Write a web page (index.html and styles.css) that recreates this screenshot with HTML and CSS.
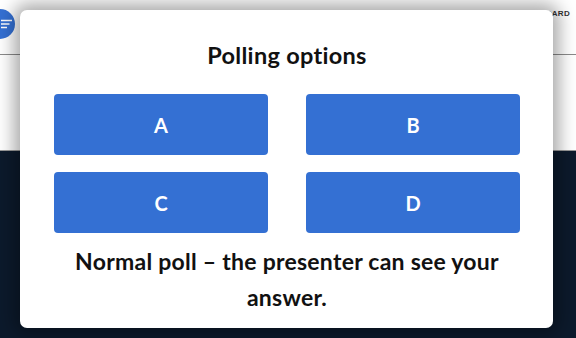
FILE: index.html
```html
<!DOCTYPE html>
<html lang="en">
<head>
<meta charset="utf-8">
<title>Polling options</title>
<link rel="stylesheet" href="styles.css">
</head>
<body>
<div class="page">
  <header class="topbar">
    <button class="menu-btn" aria-label="Menu">
      <svg width="12" height="10" viewBox="0 0 12 10"><path d="M0 1.5H11M0 5H8.5M0 8.5H6" stroke="#fff" stroke-width="1.3" fill="none"/></svg>
    </button>
    <div class="nav-icons">
      <span class="nav-dot"></span>
      <span class="nav-dot"></span>
      <span class="nav-dot"></span>
    </div>
    <div class="nav-label">DASHBOARD</div>
  </header>
  <div class="band"></div>
  <main class="dark"></main>
</div>

<div class="modal" role="dialog" aria-labelledby="poll-title">
  <h2 id="poll-title" class="modal-title">Polling options</h2>
  <div class="options">
    <button class="option">A</button>
    <button class="option">B</button>
    <button class="option">C</button>
    <button class="option">D</button>
  </div>
  <p class="note">Normal poll – the presenter can see your answer.</p>
</div>
</body>
</html>
```
FILE: styles.css
```css
html, body {
  margin: 0;
  padding: 0;
  width: 576px;
  height: 338px;
  overflow: hidden;
  font-family: "Lato", "Open Sans", sans-serif;
}

.page {
  display: flex;
  flex-direction: column;
  height: 338px;
  background: #0c1a2c;
}

.topbar {
  height: 54px;
  background: #ffffff;
  border-bottom: 1px solid #8a8a8a;
  display: flex;
  align-items: center;
  position: relative;
}

.menu-btn {
  width: 30px;
  height: 30px;
  border-radius: 50%;
  border: 0;
  padding: 0 0 0 16px;
  margin-left: -15px;
  margin-top: -6px;
  background: #3470d3;
  display: flex;
  align-items: center;
  justify-content: flex-start;
}

.nav-icons {
  display: flex;
  gap: 120px;
  margin-left: 116px;
  margin-top: -6px;
}

.nav-dot {
  width: 28px;
  height: 28px;
  border-radius: 50%;
  background: #1d3a6b;
}

.nav-label {
  margin-left: auto;
  margin-right: 6px;
  align-self: flex-start;
  margin-top: 9px;
  font-family: "Liberation Sans", sans-serif;
  font-size: 8px;
  font-weight: 700;
  letter-spacing: 0.3px;
  color: #333;
}

.band {
  height: 95px;
  background: #ffffff;
  border-bottom: 1px solid #9a9a9a;
}

.dark {
  flex: 1;
  background: #0c1a2c;
}

.modal {
  position: absolute;
  left: 20px;
  top: 10px;
  width: 533px;
  height: 318px;
  box-sizing: border-box;
  padding: 30px 33px 0 34px;
  background: #ffffff;
  border-radius: 7px;
  box-shadow: 0 0 18px 6px rgba(0, 0, 0, 0.35);
  display: flex;
  flex-direction: column;
  align-items: stretch;
}

.modal-title {
  margin: 0;
  text-align: center;
  font-size: 23.5px;
  letter-spacing: 0.3px;
  line-height: 30px;
  font-weight: 700;
  color: #111;
}

.options {
  margin-top: 24px;
  display: grid;
  grid-template-columns: 214px 214px;
  column-gap: 38px;
  row-gap: 17px;
}

.option {
  height: 61px;
  border: 0;
  border-radius: 4px;
  background: #3470d3;
  color: #ffffff;
  font-family: inherit;
  font-size: 20px;
  font-weight: 700;
  padding: 0;
}

.note {
  margin: 10px 0 0;
  text-align: center;
  font-size: 23px;
  letter-spacing: 0.25px;
  line-height: 36px;
  font-weight: 700;
  color: #111;
}
```
